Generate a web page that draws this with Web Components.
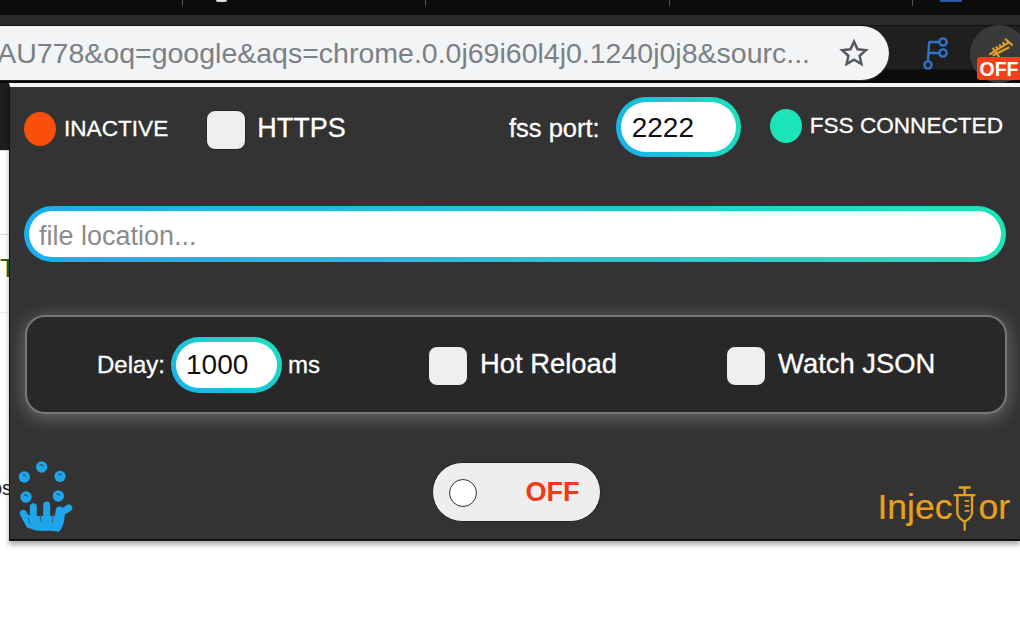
<!DOCTYPE html>
<html>
<head>
<meta charset="utf-8">
<style>
  html, body { margin: 0; height: 638px; overflow: hidden; background: #fff; }
  body { font-family: "Liberation Sans", Arial, sans-serif; color: #fff; }
</style>
</head>
<body>
<browser-chrome url="AU778&amp;oq=google&amp;aqs=chrome.0.0j69i60l4j0.1240j0j8&amp;sourc..."></browser-chrome>
<page-area>
  <injector-popup></injector-popup>
</page-area>

<script>
// small helper, every element here has the same shadow setup
class Base extends HTMLElement {
  constructor() {
    super();
    this.attachShadow({ mode: 'open' });
  }
  render(html) {
    this.shadowRoot.innerHTML = html;
  }
}

class BrowserChrome extends Base {
  connectedCallback() {
    const url = this.getAttribute('url').replace(/&/g, '&amp;');
    this.render(`
      <style>
        :host { display: block; height: 83px; background: #111; overflow: hidden; }
        .tabs { height: 15px; background: #0d0d0e; display: grid; grid-template-columns: 183px 243px 244px 243px 1fr; }
        .tabs div { border-right: 1px solid #555; height: 6px; display: flex; }
        .tabs div:last-child { border: 0; }
        .tabs b { display: block; flex: none; }
        .blob { width: 11px; height: 2px; margin-left: 33px; background: #ddd; border-radius: 0 0 6px 6px; }
        .blue { width: 22px; height: 2px; margin-left: 27px; background: #2b5a9a; }
        .strip { height: 11px; background: #2a2a2b; border-bottom: 1px solid #111; box-sizing: border-box; }
        .bar { display: flex; height: 55px; background: linear-gradient(#202021 0, #1f1f20 78%, #0c0c0c 80%); }
        .url { width: 889px; flex: none; box-sizing: border-box; height: 55px; background: #f3f4f5; border-radius: 0 28px 28px 0;
               display: flex; align-items: center; justify-content: flex-end; overflow: hidden; padding-right: 20px;
               font-size: 28.500px; color: #7b8086; white-space: nowrap; border-bottom: 1px solid #222; }
        .url svg { margin-left: 29px; flex: none; }
        .branch { margin: 10px 0 0 32px; flex: none; }
        .ext { position: relative; width: 58px; height: 58px; margin: -1px 0 0 19px; border-radius: 50%; background: #3a3a3a; flex: none; }
        .ext svg { position: absolute; left: 17px; top: 13px; }
        .off { position: absolute; left: 7px; top: 32px; width: 44px; height: 23px; background: #f2401b; border-radius: 3px;
               font: bold 19.500px/24px "Liberation Sans", sans-serif; color: #fff; text-align: center; }
        .under { height: 1px; background: #000; }
      </style>
      <div class="tabs"><div></div><div><b class="blob"></b></div><div></div><div></div><div><b class="blue"></b></div></div>
      <div class="strip"></div>
      <div class="bar">
        <div class="url">
          <span>${url}</span>
          <svg width="30" height="30" viewBox="0 0 24 24" fill="none" stroke="#55585c" stroke-width="2"><path d="M12 2.8l2.8 6.2 6.7.7-5 4.5 1.4 6.6-5.9-3.4-5.9 3.4 1.4-6.6-5-4.5 6.7-.7z"/></svg>
        </div>
        <svg class="branch" width="30" height="36" viewBox="0 0 30 36" fill="none" stroke="#2f74c8" stroke-width="2.400">
          <circle cx="22" cy="6" r="3.600"/><circle cx="22" cy="17" r="3.600"/><circle cx="7" cy="29" r="3.600"/>
          <path d="M18.400 6H9Q8 6 8 8L7 25.400M8 17H18.400"/>
        </svg>
        <div class="ext">
          <svg width="28" height="20" viewBox="0 0 32 24" fill="none" stroke="#e0a02a" stroke-width="2.600">
            <path d="M2 20L26 5M21 1l9 8M6 12l8 11M10 10l2 3M14 8l2 3M18 5l2 3M6 21l20-10"/>
          </svg>
          <div class="off">OFF</div>
        </div>
      </div>
      <div class="under"></div>
    `);
  }
}

class PageArea extends Base {
  connectedCallback() {
    this.render(`
      <style>
        :host { display: flex; align-items: flex-start; height: 555px; background: #fff; }
        .strip { width: 9px; flex: none; height: 458px; color: #222; font-size: 20px; overflow: hidden; }
        .dark { height: 67px; background: #1e1e1e; }
        .cell { box-sizing: border-box; border-top: 1px solid #ddd; white-space: nowrap; }
        .t { height: 84px; }
        .g { height: 78px; color: #1a6a1a; padding-top: 18px; line-height: 30px; font-size: 26px; }
        .o { height: 180px; padding-top: 165px; line-height: 20px; margin-left: -9px; border-top-color: #eee; }
        .popup { flex: 1; min-width: 0; }
      </style>
      <div class="strip">
        <div class="dark"></div>
        <div class="cell t"></div>
        <div class="cell g">T</div>
        <div class="cell o">os</div>
      </div>
      <div class="popup"><slot></slot></div>
    `);
  }
}

class StatusDot extends Base {
  connectedCallback() {
    this.render(`
      <style>
        :host { display: inline-flex; align-items: center; gap: 8px; font-size: 22.600px; color: #fff; white-space: nowrap; -webkit-text-stroke: .3px #fff; }
        i { width: 32px; height: 34px; border-radius: 50%; background: ${this.getAttribute('color')}; flex: none; }
      </style>
      <i></i><slot></slot>
    `);
  }
}

class CheckLabel extends Base {
  connectedCallback() {
    this.render(`
      <style>
        :host { display: inline-flex; align-items: center; gap: var(--gap, 10px); font-size: var(--size, 27px); color: #fff; white-space: nowrap; -webkit-text-stroke: .3px #fff; }
        i { width: 40px; height: 40px; box-sizing: border-box; border-radius: 9px; background: #efefef; border: 1px solid #222; flex: none; }
        span { margin-bottom: 3px; }
      </style>
      <i></i><span><slot></slot></span>
    `);
  }
}

// pill with the blue-green gradient border
class PillField extends Base {
  connectedCallback() {
    const angle = this.getAttribute('angle') || '90deg';
    this.render(`
      <style>
        :host { display: block; box-sizing: border-box; border: 5px solid transparent; border-radius: 30px; height: var(--h, 60px); width: var(--w, auto);
                background: linear-gradient(#fff, #fff) padding-box, linear-gradient(${angle}, #1aaef0, #1de3b8) border-box;
                font-size: var(--size, 28px); color: var(--ink, #111); white-space: nowrap; -webkit-text-stroke: 0; }
        div { height: 100%; box-sizing: border-box; display: flex; align-items: center; padding: var(--top, 1px) 0 0 var(--pad, 11px); }
      </style>
      <div><slot></slot></div>
    `);
  }
}

class ToggleSwitch extends Base {
  connectedCallback() {
    this.render(`
      <style>
        :host { display: flex; align-items: center; box-sizing: border-box; width: 169px; height: 60px; border-radius: 30px; background: #eee; border: 1px solid #222; padding: 1px 20px 0 16px; justify-content: space-between; }
        i { width: 28px; height: 28px; box-sizing: border-box; border-radius: 50%; background: #fff; border: 1.500px solid #333; }
        span { font: bold 27px "Liberation Sans", sans-serif; color: #f03a17; }
      </style>
      <i></i><span><slot></slot></span>
    `);
  }
}

class SplashLogo extends Base {
  connectedCallback() {
    const drops = [[125, 75], [73, 105], [180, 103], [78, 165], [175, 162]];
    this.render(`
      <style>:host { display: block; width: 60px; height: 80px; } svg { display: block; }</style>
      <svg width="60" height="80" viewBox="45 45 180 240">
        ${drops.map(([x, y]) => `<circle cx="${x}" cy="${y}" r="17" fill="#1fa6ea"/><path d="M${x - 6} ${y - 6}q10-3 11 5" fill="none" stroke="#28303a" stroke-width="2.500"/>`).join('')}
        <path fill="#1fa6ea" d="M62 212C80 225 170 225 195 215C192 240 190 258 175 270C150 262 120 272 95 262C78 250 64 232 62 212Z"/>
        <g fill="none" stroke="#1fa6ea" stroke-width="21" stroke-linecap="round">
          <path d="M70 214L88 248M100 194V245M140 189V245"/>
          <path d="M178 204L172 245M184 212L206 198"/>
        </g>
        <path fill="none" stroke="#2b5f80" stroke-width="3" d="M85 228l4 16M120 216l3 24M160 216l-3 26"/>
      </svg>
    `);
  }
}

class InjectorLogo extends Base {
  connectedCallback() {
    this.render(`
      <style>
        :host { display: inline-flex; align-items: flex-start; font-size: 35.500px; line-height: 44px; color: #e9a11c; white-space: nowrap; -webkit-text-stroke: .2px #e9a11c; }
        svg { flex: none; margin: 0 1px 0 0; }
      </style>
      <span>Injec</span>
      <svg width="25" height="47" viewBox="280 68 75 140" fill="none" stroke="#e9a11c" stroke-width="7">
        <path d="M300 75H336M318 75V97M285 98H350M296 98V150Q296 165 318 178Q340 165 340 150V98M318 178V205"/>
        <path d="M318 115H332M318 130H332M318 145H332" stroke-width="5"/>
      </svg>
      <span>or</span>
    `);
  }
}

class InjectorPopup extends Base {
  connectedCallback() {
    this.render(`
      <style>
        :host { display: block; box-sizing: border-box; height: 458px; background: #333; border-top: 4px solid #f4f4f4; border-bottom: 2px solid #111; border-left: 1px solid #111; padding: 10px 13px 0 14px; box-shadow: 0 4px 5px rgba(0,0,0,.32); }
        .top { display: flex; align-items: center; height: 60px; }
        .inactive { margin-top: 3px; }
        .https { margin: 6px 0 0 38px; --gap: 11px; }
        .port { margin: 3px 16px 0 auto; font-size: 25.500px; color: #fff; -webkit-text-stroke: .3px #fff; }
        .fss { margin: -3px 4px 0 29px; }
        .file { margin: 49px 1px 0 0; --h: 56px; --size: 27px; --ink: #8b8b8b; --pad: 10px; --top: 4px; }
        .panel { margin: 53px 0 0 1px; height: 99px; box-sizing: border-box; background: #282828; border: 2px solid #777; border-radius: 20px; box-shadow: 0 3px 18px rgba(255,255,255,.3); display: flex; align-items: center; padding-left: 70px; --size: 27.400px; --gap: 12px; }
        .delay { display: flex; align-items: center; font-size: 24px; gap: 6px; white-space: nowrap; -webkit-text-stroke: .3px #fff; }
        .delay pill-field { --h: 56px; --w: 111px; --pad: 10px; --size: 28px; }
        .hot { margin: 2px 0 0 108px; }
        .watch { margin: 2px 0 0 109px; }
        .foot { display: grid; grid-template-columns: 1fr auto 1fr; align-items: start; }
        .foot splash-logo { margin: 43px 0 0 -9px; }
        .foot toggle-switch { margin: 48px 0 0 1px; }
        .foot injector-logo { justify-self: end; margin: 71px -3px 0 0; }
      </style>
      <div class="top">
        <status-dot class="inactive" color="#f94e0c">INACTIVE</status-dot>
        <check-label class="https">HTTPS</check-label>
        <span class="port">fss port:</span>
        <pill-field style="--w:125px" angle="60deg">2222</pill-field>
        <status-dot class="fss" color="#1de3b8">FSS CONNECTED</status-dot>
      </div>
      <pill-field class="file">file location...</pill-field>
      <div class="panel">
        <div class="delay">Delay: <pill-field angle="30deg">1000</pill-field> ms</div>
        <check-label class="hot">Hot Reload</check-label>
        <check-label class="watch">Watch JSON</check-label>
      </div>
      <div class="foot">
        <splash-logo></splash-logo>
        <toggle-switch>OFF</toggle-switch>
        <injector-logo></injector-logo>
      </div>
    `);
  }
}

customElements.define('browser-chrome', BrowserChrome);
customElements.define('page-area', PageArea);
customElements.define('status-dot', StatusDot);
customElements.define('check-label', CheckLabel);
customElements.define('pill-field', PillField);
customElements.define('toggle-switch', ToggleSwitch);
customElements.define('splash-logo', SplashLogo);
customElements.define('injector-logo', InjectorLogo);
customElements.define('injector-popup', InjectorPopup);
</script>
</body>
</html>
